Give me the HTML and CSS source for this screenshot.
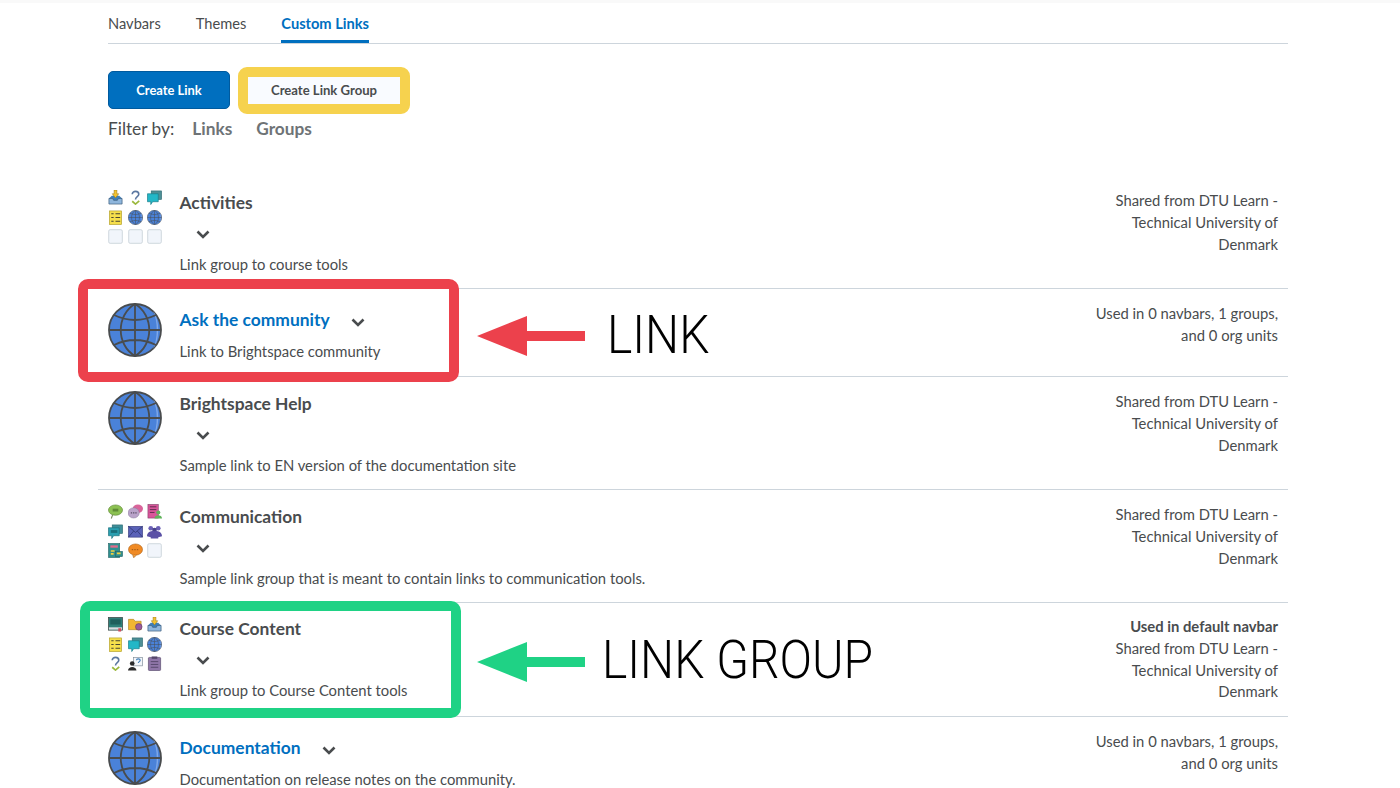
FILE: index.html
```html
<!DOCTYPE html>
<html lang="en">
  <head>
    <meta charset="UTF-8" />
    <title>Custom Links</title>
    <link rel="stylesheet" href="styles.css">
  </head>
  <body>
    <svg class="iconDefs" width="0" height="0">
      <defs>
        <symbol id="globe" viewBox="0 0 54 54">
          <circle cx="27" cy="27" r="26" fill="#4a82d9" stroke="#494c4e" stroke-width="1.800" />
          <path d="M45 8C52 16 52 38 45 46C50 36 50 18 45 8Z" fill="#7fa8e8" />
          <path d="M27 1V53M1 27H53M6 12Q27 22 48 12M6 42Q27 32 48 42" fill="none" stroke="#494c4e" stroke-width="1.800" />
          <path d="M27 1C8 12 8 42 27 53C46 42 46 12 27 1Z" fill="none" stroke="#494c4e" stroke-width="1.800" />
        </symbol>
        <symbol id="inbox" viewBox="0 0 16 16">
          <path d="M1 9L4 6H12L15 9V15H1Z" fill="#3f7fb8" />
          <path d="M1 9H5L6 11H10L11 9H15V15H1Z" fill="#8fb6dc" stroke="#3a5a78" stroke-width=".7" />
          <path d="M6.500 0H9.500V4H11.500L8 8.500L4.500 4H6.500Z" fill="#f2c230" stroke="#8a6d12" stroke-width=".5" />
        </symbol>
        <symbol id="question" viewBox="0 0 16 16">
          <path d="M4.500 4.500C4.500 .5 11.500 .5 11.500 4.500C11.500 7 8 7 8 10" fill="none" stroke="#5a76a0" stroke-width="1.700" />
          <path d="M4.500 12L8 15L12 11.500" fill="none" stroke="#9ab83c" stroke-width="1.800" />
        </symbol>
        <symbol id="chat" viewBox="0 0 16 16">
          <rect x="4.500" y="1" width="11" height="9" fill="#4d8f96" stroke="#2e6a72" stroke-width=".7" />
          <path d="M.5 4H12V12.500H6L4 15.500V12.500H.5Z" fill="#22b7c7" stroke="#177a86" stroke-width=".7" />
        </symbol>
        <symbol id="checklist" viewBox="0 0 16 16">
          <rect x="1.500" y="1" width="13" height="14.500" fill="#f6df4c" stroke="#b29f2a" stroke-width=".7" />
          <path d="M3.500 4H6M8 4H13M3.500 8H6M8 8H13M3.500 12H6M8 12H13" stroke="#4a4630" stroke-width="1.200" />
        </symbol>
        <symbol id="blank" viewBox="0 0 16 16">
          <rect x=".75" y=".75" width="14.500" height="14.500" rx="1.500" fill="#f1f5fb" stroke="#cdd5dc" stroke-width="1" />
        </symbol>
        <symbol id="idea" viewBox="0 0 16 16">
          <ellipse cx="8" cy="6.500" rx="7.500" ry="5.500" fill="#8cc152" stroke="#5f8b36" stroke-width=".7" />
          <path d="M5 11.500L3.500 15.500" stroke="#7a8a60" stroke-width="1.200" />
          <rect x="5" y="5" width="6" height="3" fill="#5f8b36" />
        </symbol>
        <symbol id="talk" viewBox="0 0 16 16">
          <ellipse cx="10.500" cy="5" rx="5.500" ry="4.500" fill="#d9649a" />
          <ellipse cx="6" cy="9.500" rx="6" ry="5.500" fill="#b9a3c9" stroke="#8a7a9a" stroke-width=".5" />
          <path d="M3 9.500H9.500" stroke="#5a4f66" stroke-width="1.400" stroke-dasharray="1.400 1" />
        </symbol>
        <symbol id="docPerson" viewBox="0 0 16 16">
          <rect x="1" y=".5" width="11" height="14.500" fill="#d9559a" stroke="#7a3a62" stroke-width=".6" />
          <path d="M3 3H10M3 6H10M3 9H8" stroke="#5a2a4a" stroke-width="1" />
          <circle cx="12" cy="9" r="2.200" fill="#5fb35a" />
          <path d="M8 15.500C8 11 16 11 16 15.500Z" fill="#5fb35a" />
        </symbol>
        <symbol id="chatBlue" viewBox="0 0 16 16">
          <rect x="4.500" y="1" width="11" height="9" fill="#3f8f9a" stroke="#2e6a72" stroke-width=".7" />
          <path d="M.5 4H12V12.500H6L4 15.500V12.500H.5Z" fill="#2a9fb0" stroke="#1b6f7a" stroke-width=".7" />
          <rect x="3" y="6.500" width="7" height="3" fill="#1b6f7a" />
        </symbol>
        <symbol id="mail" viewBox="0 0 16 16">
          <rect x=".5" y="2.500" width="15" height="11.500" fill="#5a62b8" stroke="#3a3f80" stroke-width=".7" />
          <path d="M.5 2.500L8 9L15.500 2.500M.5 14L6 7.500M15.500 14L10 7.500" fill="none" stroke="#2f3470" stroke-width=".8" />
        </symbol>
        <symbol id="people" viewBox="0 0 16 16">
          <circle cx="4" cy="4.500" r="2.500" fill="#6a5fb5" />
          <circle cx="12" cy="4.500" r="2.500" fill="#6a5fb5" />
          <circle cx="8" cy="6.500" r="2.500" fill="#46408a" />
          <path d="M0 13C0 7 8 7 8 8C8 7 16 7 16 13L12 14V15.500H4V14Z" fill="#5a50a5" />
        </symbol>
        <symbol id="board" viewBox="0 0 16 16">
          <rect x=".5" y=".5" width="12" height="15" fill="#2f8f8f" stroke="#1f5f60" stroke-width=".6" />
          <rect x="2.500" y="2.500" width="8" height="2.500" fill="#e06a8a" />
          <rect x="8" y="9" width="7.500" height="5.500" fill="#2f8f8f" stroke="#1f5f60" stroke-width=".6" />
          <path d="M3 8.500H7M3 11.500H6M9.500 11H13.500" stroke="#f0d040" stroke-width="1.800" />
        </symbol>
        <symbol id="speech" viewBox="0 0 16 16">
          <ellipse cx="8" cy="7" rx="7.500" ry="6" fill="#f08a24" stroke="#a85f18" stroke-width=".6" />
          <path d="M5 12.500L6 15.800L9 13" fill="#f0a040" stroke="#a85f18" stroke-width=".6" />
          <path d="M4 7H12" stroke="#a85f18" stroke-width="1.300" stroke-dasharray="1.500 1.200" />
        </symbol>
        <symbol id="book" viewBox="0 0 16 16">
          <rect x=".5" y=".5" width="15" height="13.500" fill="#2e7f78" stroke="#3f4a48" stroke-width=".8" />
          <rect x="2.500" y="2.500" width="11" height="5.500" fill="#1f5f5c" />
          <rect x="1" y="11" width="14" height="2.500" fill="#d8dde0" />
          <rect x="11" y="12" width="3" height="3.500" fill="#d14a5a" />
        </symbol>
        <symbol id="folder" viewBox="0 0 16 16">
          <path d="M.5 2.500H6L7.500 4.500H14V13.500H.5Z" fill="#f2b632" stroke="#a87d1c" stroke-width=".6" />
          <circle cx="11.500" cy="10.500" r="3.500" fill="#9a5a9a" stroke="#5f3a60" stroke-width=".6" />
        </symbol>
        <symbol id="presenter" viewBox="0 0 16 16">
          <rect x="6" y="1.500" width="9.500" height="9" fill="#f3f6fa" stroke="#7c8a96" stroke-width=".7" />
          <path d="M9 4.500C9 2.500 13 2.500 13 4.500C13 6 11 6 11 7.500" fill="none" stroke="#3f7fb8" stroke-width="1.200" />
          <circle cx="4.500" cy="8" r="2.500" fill="#2b2b2b" />
          <path d="M0 15.500C0 10.500 9 10.500 9 15.500Z" fill="#2b2b2b" />
        </symbol>
        <symbol id="clipboard" viewBox="0 0 16 16">
          <rect x="1.500" y="1.500" width="13" height="14" rx="1" fill="#8f76a8" stroke="#54466a" stroke-width=".7" />
          <rect x="5" y=".5" width="6" height="2.500" fill="#54466a" />
          <path d="M4 6H12M4 9H12M4 12H12" stroke="#54466a" stroke-width="1" />
        </symbol>
      </defs>
    </svg>

    <div class="topStrip"></div>
    <div class="page">
      <div class="tabs">
        <a class="tab">Navbars</a>
        <a class="tab">Themes</a>
        <a class="tab tabActive">Custom Links</a>
      </div>

      <div class="actions">
        <button class="btn btnPrimary">Create Link</button>
        <div class="yellowMark">
          <button class="btn btnPlain">Create Link Group</button>
        </div>
      </div>

      <div class="filter">
        <span class="filterLabel">Filter by:</span>
        <a class="filterOption">Links</a>
        <a class="filterOption">Groups</a>
      </div>

      <div class="linkList">
        <div class="row rowGroup">
          <div class="iconGrid">
            <svg><use href="#inbox" /></svg>
            <svg><use href="#question" /></svg>
            <svg><use href="#chat" /></svg>
            <svg><use href="#checklist" /></svg>
            <svg><use href="#globe" /></svg>
            <svg><use href="#globe" /></svg>
            <svg><use href="#blank" /></svg>
            <svg><use href="#blank" /></svg>
            <svg><use href="#blank" /></svg>
          </div>
          <div class="rowMain">
            <div class="rowTitle">Activities</div>
            <div class="chevron"><svg viewBox="0 0 14 9"><path d="M1.500 1.500L7 7L12.500 1.500" /></svg></div>
            <div class="rowDesc">Link group to course tools</div>
          </div>
          <div class="rowMeta">Shared from DTU Learn -<br />Technical University of<br />Denmark</div>
        </div>

        <div class="row rowLink">
          <svg class="bigGlobe"><use href="#globe" /></svg>
          <div class="rowMain">
            <div class="titleLine">
              <a class="rowTitle rowTitleLink">Ask the community</a>
              <div class="chevron"><svg viewBox="0 0 14 9"><path d="M1.500 1.500L7 7L12.500 1.500" /></svg></div>
            </div>
            <div class="rowDesc">Link to Brightspace community</div>
          </div>
          <div class="rowMeta">Used in 0 navbars, 1 groups,<br />and 0 org units</div>
        </div>

        <div class="row rowGroup">
          <svg class="bigGlobe"><use href="#globe" /></svg>
          <div class="rowMain">
            <div class="rowTitle">Brightspace Help</div>
            <div class="chevron"><svg viewBox="0 0 14 9"><path d="M1.500 1.500L7 7L12.500 1.500" /></svg></div>
            <div class="rowDesc">Sample link to EN version of the documentation site</div>
          </div>
          <div class="rowMeta">Shared from DTU Learn -<br />Technical University of<br />Denmark</div>
        </div>

        <div class="row rowGroup">
          <div class="iconGrid">
            <svg><use href="#idea" /></svg>
            <svg><use href="#talk" /></svg>
            <svg><use href="#docPerson" /></svg>
            <svg><use href="#chatBlue" /></svg>
            <svg><use href="#mail" /></svg>
            <svg><use href="#people" /></svg>
            <svg><use href="#board" /></svg>
            <svg><use href="#speech" /></svg>
            <svg><use href="#blank" /></svg>
          </div>
          <div class="rowMain">
            <div class="rowTitle">Communication</div>
            <div class="chevron"><svg viewBox="0 0 14 9"><path d="M1.500 1.500L7 7L12.500 1.500" /></svg></div>
            <div class="rowDesc">Sample link group that is meant to contain links to communication tools.</div>
          </div>
          <div class="rowMeta">Shared from DTU Learn -<br />Technical University of<br />Denmark</div>
        </div>

        <div class="row rowGroup rowTall">
          <div class="iconGrid">
            <svg><use href="#book" /></svg>
            <svg><use href="#folder" /></svg>
            <svg><use href="#inbox" /></svg>
            <svg><use href="#checklist" /></svg>
            <svg><use href="#chat" /></svg>
            <svg><use href="#globe" /></svg>
            <svg><use href="#question" /></svg>
            <svg><use href="#presenter" /></svg>
            <svg><use href="#clipboard" /></svg>
          </div>
          <div class="rowMain">
            <div class="rowTitle">Course Content</div>
            <div class="chevron"><svg viewBox="0 0 14 9"><path d="M1.500 1.500L7 7L12.500 1.500" /></svg></div>
            <div class="rowDesc">Link group to Course Content tools</div>
          </div>
          <div class="rowMeta"><strong>Used in default navbar</strong><br />Shared from DTU Learn -<br />Technical University of<br />Denmark</div>
        </div>

        <div class="row rowLink">
          <svg class="bigGlobe"><use href="#globe" /></svg>
          <div class="rowMain">
            <div class="titleLine">
              <a class="rowTitle rowTitleLink">Documentation</a>
              <div class="chevron"><svg viewBox="0 0 14 9"><path d="M1.500 1.500L7 7L12.500 1.500" /></svg></div>
            </div>
            <div class="rowDesc">Documentation on release notes on the community.</div>
          </div>
          <div class="rowMeta">Used in 0 navbars, 1 groups,<br />and 0 org units</div>
        </div>
      </div>

      <!-- annotations drawn over the screenshot -->
      <div class="markBox markRed"></div>
      <div class="markBox markGreen"></div>
      <svg class="markArrow arrowRed" viewBox="0 0 108 40"><path d="M0 20L50 0V15H108V25H50V40Z" /></svg>
      <svg class="markArrow arrowGreen" viewBox="0 0 108 40"><path d="M0 20L50 0V15H108V25H50V40Z" /></svg>
      <div class="markLabel labelLink">LINK</div>
      <div class="markLabel labelGroup">LINK GROUP</div>
    </div>
  </body>
</html>
```

FILE: styles.css
```css
* {
  box-sizing: border-box;
}

html,
body {
  height: 788px;
  overflow: hidden;
}

body {
  margin: 0;
  background-color: #ffffff;
  color: #494c4e;
  font-family: "Lato", sans-serif;
  font-size: 14.8px;
}

.iconDefs {
  position: absolute;
}

.topStrip {
  height: 3px;
  background-color: #f9f9f9;
}

.page {
  position: relative;
  width: 1400px;
  height: 785px;
  padding: 0 112px 0 98px;
}

/* tabs */
.tabs {
  display: flex;
  gap: 35px;
  height: 41px;
  margin: 0 0 0 10px;
  border-bottom: 1px solid #cdd5dc;
}

.tab {
  height: 40px;
  padding-top: 11px;
  line-height: 20px;
  font-size: 14.65px;
}

.tabActive {
  color: #006fbf;
  font-weight: 700;
  border-bottom: 3px solid #006fbf;
}

/* buttons */
.actions {
  display: flex;
  align-items: center;
  gap: 8px;
  margin: 23px 10px 0;
}

.btn {
  height: 38px;
  border-radius: 5px;
  font-family: "Lato", sans-serif;
  font-size: 12.9px;
  font-weight: 700;
}

.btnPrimary {
  width: 122px;
  margin-bottom: 1px;
  padding-bottom: 2px;
  background-color: #006fbf;
  border: 1px solid #005a9e;
  color: #ffffff;
}

.yellowMark {
  width: 172px;
  height: 47px;
  border: 10px solid #f6d24e;
  border-radius: 9px;
}

.btnPlain {
  display: block;
  width: 100%;
  height: 100%;
  padding: 0 0 2px;
  background-color: #f9fbff;
  border: none;
  border-radius: 0;
  color: #494c4e;
  font-size: 13.1px;
}

.filter {
  display: flex;
  align-items: center;
  height: 29px;
  margin: 0 10px 33px;
  font-size: 17.3px;
}

.filterLabel {
  margin-right: 18px;
}

.filterOption {
  margin-right: 24px;
  color: #6e7376;
  font-weight: 700;
}

/* list rows */
.row {
  display: grid;
  grid-template-columns: 72px 1fr auto;
  padding: 14px 10px 0;
  border-bottom: 1px solid #cdd5dc;
}

.rowGroup {
  height: 113px;
}

.rowLink {
  height: 88px;
}

.rowTall {
  height: 114px;
  padding-top: 13px;
}

.iconGrid {
  display: grid;
  grid-template-columns: repeat(3, 15px);
  grid-auto-rows: 15px;
  gap: 4.5px;
  justify-content: start;
}

.rowTall .iconGrid {
  margin-top: 1px;
}

.iconGrid svg {
  width: 15px;
  height: 15px;
}

.bigGlobe {
  width: 54px;
  height: 54px;
}

.rowMain {
  min-width: 0;
  margin-left: -0.5px;
}

.rowTitle {
  display: block;
  height: 26px;
  line-height: 26px;
  font-size: 17.4px;
  font-weight: 700;
}

.rowTitleLink {
  color: #006fbf;
}

.titleLine {
  display: flex;
  align-items: center;
  height: 34px;
}

.chevron {
  display: flex;
  align-items: center;
  justify-content: center;
  width: 46px;
  height: 34px;
  margin-top: 1.5px;
}

.titleLine .chevron {
  margin-left: 5px;
  margin-top: 4px;
}

.chevron svg {
  width: 14px;
  height: 9px;
  fill: none;
  stroke: #494c4e;
  stroke-width: 2.6;
}

.rowDesc {
  line-height: 22px;
  margin-top: 1.5px;
}

.rowLink .rowDesc {
  margin-top: 3px;
}

.rowMeta {
  line-height: 21.8px;
  text-align: right;
}

/* annotations */
.markBox {
  position: absolute;
  border-style: solid;
  border-width: 10px;
  border-radius: 10px;
}

.markRed {
  left: 78px;
  top: 276px;
  width: 381px;
  height: 103px;
  border-color: #ec414c;
}

.markGreen {
  left: 80px;
  top: 598px;
  width: 381px;
  height: 117px;
  border-color: #1fd285;
}

.markArrow {
  position: absolute;
  left: 477px;
  width: 108px;
  height: 40px;
}

.arrowRed {
  top: 313px;
  fill: #ec414c;
}

.arrowGreen {
  top: 639px;
  fill: #1fd285;
}

.markLabel {
  position: absolute;
  color: #000000;
  font-family: "Roboto", sans-serif;
  font-size: 53px;
  font-weight: 300;
  line-height: 60px;
  white-space: nowrap;
  transform: scaleX(0.905);
  transform-origin: left center;
}

.labelLink {
  left: 607px;
  top: 302px;
}

.labelGroup {
  left: 602px;
  top: 627px;
}
```
